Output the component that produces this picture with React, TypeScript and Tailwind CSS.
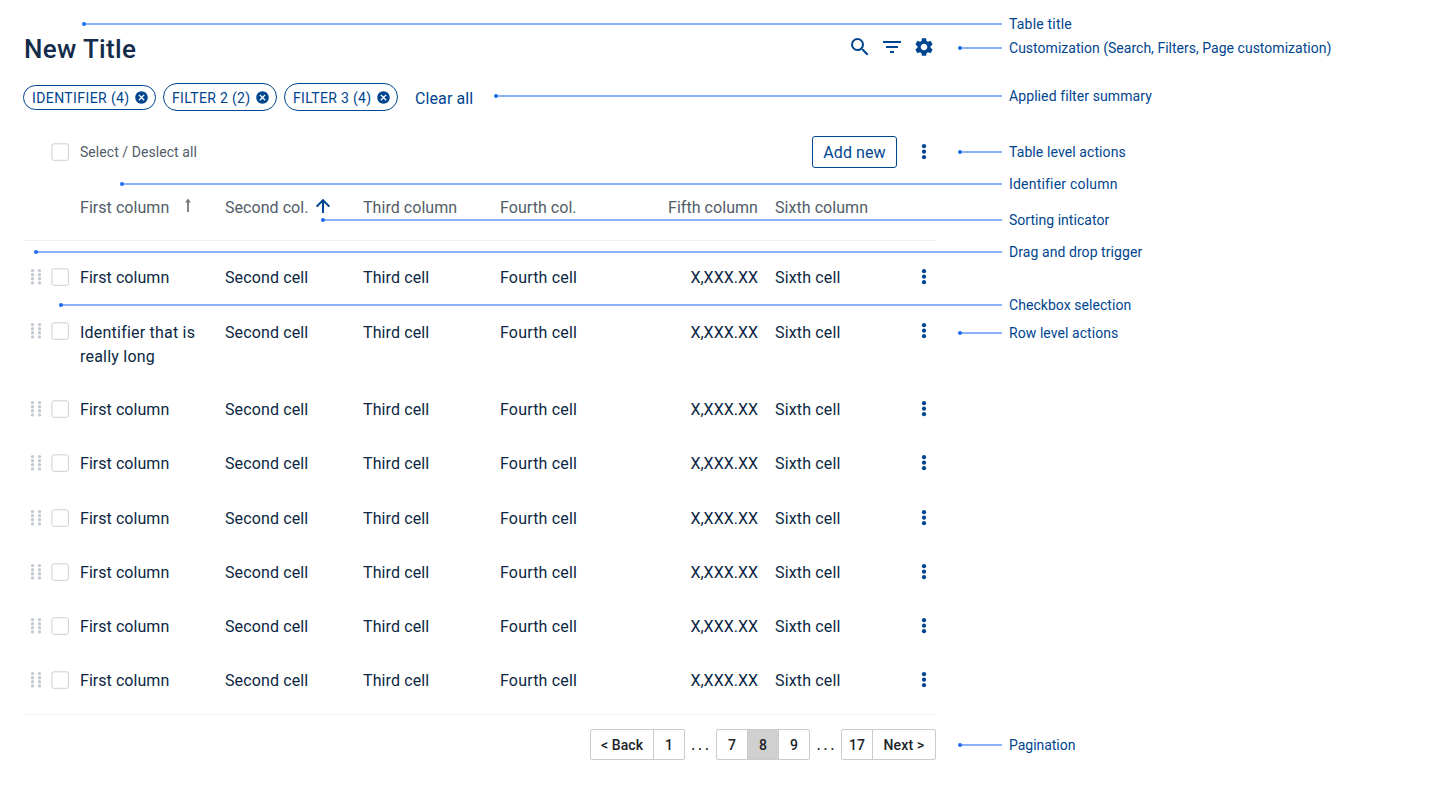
import type { ReactNode } from "react";
import { MdCancel, MdFilterList, MdSearch, MdSettings } from "react-icons/md";

const GRID = "grid grid-cols-[28px_28px_145px_138px_137px_137px_138px_137px_24px]";

const identifiers = [
  "First column",
  "Identifier that is really long",
  "First column",
  "First column",
  "First column",
  "First column",
  "First column",
  "First column",
];

const callouts = [
  { label: "Table title", gap: "mt-3", line: "w-[918px]", ls: "tracking-[0.2px]" },
  { label: "Customization (Search, Filters, Page customization)", gap: "", line: "w-[42px]", ls: "tracking-[0.02px]" },
  { label: "Applied filter summary", gap: "mt-6", line: "w-[506px]", ls: "tracking-[0.09px]" },
  { label: "Table level actions", gap: "mt-8", line: "w-[42px]", ls: "tracking-[0.1px]" },
  { label: "Identifier column", gap: "mt-2", line: "w-[880px]", ls: "tracking-[0.2px]" },
  { label: "Sorting inticator", gap: "mt-3", line: "w-[679px]", ls: "tracking-[0.03px]" },
  { label: "Drag and drop trigger", gap: "mt-2", line: "w-[966px]", ls: "tracking-[0.07px]" },
  { label: "Checkbox selection", gap: "mt-[29px]", line: "w-[941px]", ls: "tracking-[0.05px]" },
  { label: "Row level actions", gap: "mt-1", line: "w-[42px]", ls: "tracking-[0.07px]" },
  { label: "Pagination", gap: "mt-[388px]", line: "w-[42px]", ls: "tracking-[-0.03px]" },
];

function Kebab() {
  return (
    <svg width="24" height="24" viewBox="0 0 24 24" fill="#00458f">
      <circle cx="12" cy="6.2" r="2.1" />
      <circle cx="12" cy="11.7" r="2.1" />
      <circle cx="12" cy="17.2" r="2.1" />
    </svg>
  );
}

function DragHandle() {
  return (
    <svg width="24" height="24" viewBox="0 0 24 24" fill="#c3cad4">
      {[5.6, 9.7, 13.8, 17.9].map((y) => (
        <g key={y}>
          <circle cx="8.5" cy={y} r="1.7" />
          <circle cx="15.5" cy={y} r="1.7" />
        </g>
      ))}
    </svg>
  );
}

function Checkbox() {
  return (
    <svg width="18" height="24" viewBox="0 0 18 24" fill="none" stroke="#c9d0d8" className="-ml-px">
      <rect x="0.9" y="3.8" width="16.5" height="16.5" rx="2" />
    </svg>
  );
}

function Chip({ children, className }: { children: ReactNode; className: string }) {
  return (
    <button className={`flex items-center justify-between rounded-full border border-[#00458f] pr-[6px] pl-2 text-sm text-[#00458f] ${className}`}>
      <span className="pt-px">{children}</span>
      <MdCancel size={15} />
    </button>
  );
}

function Page({ children, className = "" }: { children: ReactNode; className?: string }) {
  return (
    <button className={`flex h-full items-center justify-center border-l border-[#cbcbcb] pt-px first:border-l-0 ${className}`}>
      {children}
    </button>
  );
}

export default function App() {
  return (
    <div className="flex h-[808px] w-[1440px] overflow-hidden bg-white pl-6 font-[Roboto,'Noto_Sans',sans-serif] text-base text-[#0b2744]">
      <main className="flex w-[912px] flex-col">
        <header className="mt-8 flex h-8 items-center justify-between">
          <h1 className="pt-[2px] text-[26px] leading-8 font-medium tracking-[0.35px] text-[#132c4a]">New Title</h1>
          <div className="flex items-center gap-2 pb-[2px] text-[#00458f]">
            <MdSearch size={24} />
            <MdFilterList size={24} />
            <div className="flex w-6 justify-center"><MdSettings size={22} /></div>
          </div>
        </header>

        <div className="mt-[19px] -ml-px flex h-7 items-center gap-[7px]">
          <Chip className="h-[25px] w-[133px] tracking-[0.4px]">IDENTIFIER (4)</Chip>
          <Chip className="h-7 w-[114px] tracking-[0.33px]">FILTER 2 (2)</Chip>
          <Chip className="h-7 w-[114px] tracking-[0.33px]">FILTER 3 (4)</Chip>
          <a className="ml-[10px] pt-[3px] tracking-[0.1px] text-[#00458f]">Clear all</a>
        </div>

        <div className="mt-[25px] flex h-8 items-center pl-7">
          <div className="w-7"><Checkbox /></div>
          <span className="text-sm tracking-[0.06px] text-[#525c69]">Select / Deslect all</span>
          <button className="mr-[15px] ml-auto h-8 w-[85px] rounded-[3px] border border-[#00458f] pt-px tracking-[0.1px] text-[#00458f]">Add new</button>
          <Kebab />
        </div>

        <div className={`${GRID} mt-[28px] h-[45px] border-b border-[#f1f1f1] leading-6 tracking-[0.05px] text-[#525c69]`}>
          <span />
          <span />
          <span className="flex">
            First column
            <svg width="8" height="24" viewBox="0 0 8 24" fill="#777777" className="ml-[15px]">
              <path d="M4 2.4 6.8 6.4H4.9V16H3.1V6.4H1.2Z" />
            </svg>
          </span>
          <span className="flex">
            Second col.
            <svg width="16" height="24" viewBox="0 0 16 24" fill="none" stroke="#00458f" strokeWidth="2" className="ml-[7px]">
              <path d="M8 17V4.5M1.6 10.6 8 4.2l6.4 6.4" />
            </svg>
          </span>
          <span>Third column</span>
          <span>Fourth col.</span>
          <span className="-ml-4 pr-[17px] text-right">Fifth column</span>
          <span>Sixth column</span>
          <span />
        </div>

        <div className="h-[474px] border-b border-[#f4f4f4] leading-6 tracking-[0.12px]">
          {identifiers.map((name, i) => {
            const wraps = name.length > 20;
            return (
              <div key={i} className={`${GRID} pt-6 ${wraps ? "pb-[4.15px] *:[span]:pt-[2px]" : "pb-[5.15px] *:[span]:pt-px"}`}>
                <DragHandle />
                <Checkbox />
                <span className={wraps ? "pr-5 tracking-[0.22px]" : "tracking-[0.05px]"}>{name}</span>
                <span>Second cell</span>
                <span>Third cell</span>
                <span className="tracking-[0.18px]">Fourth cell</span>
                <span className="pr-[17px] text-right tracking-normal">X,XXX.XX</span>
                <span className="tracking-[0.16px]">Sixth cell</span>
                <Kebab />
              </div>
            );
          })}
        </div>

        <nav className="mt-[14px] flex h-[31px] items-center justify-end text-sm font-medium text-[#202327]">
          <div className="flex h-full rounded-[2px] border border-[#cbcbcb]">
            <Page className="w-[62px] tracking-[0.1px]">&lt; Back</Page>
            <Page className="w-[31px]">1</Page>
          </div>
          <span className="w-[31px] pt-px pl-[2px] text-center tracking-[3px]">...</span>
          <div className="flex h-full rounded-[2px] border border-[#cbcbcb]">
            <Page className="w-[30px]">7</Page>
            <Page className="w-[31px] bg-[#d0d0d0]">8</Page>
            <Page className="w-[31px]">9</Page>
          </div>
          <span className="w-[31px] pt-px pl-[3px] text-center tracking-[3px]">...</span>
          <div className="flex h-full rounded-[2px] border border-[#cbcbcb]">
            <Page className="w-[30px]">17</Page>
            <Page className="w-[63px] tracking-[0.2px]">Next &gt;</Page>
          </div>
        </nav>
      </main>

      <aside className="ml-[73px] flex flex-col text-sm leading-6 text-[#00458f]">
        {callouts.map((c) => (
          <div key={c.label} className={`relative h-6 whitespace-nowrap ${c.gap} ${c.ls}`}>
            <span className={`absolute top-[11px] right-full mr-[7px] h-[2px] bg-[#8bb1f9] ${c.line}`}>
              <span className="absolute top-[-1px] left-[-2px] size-1 rounded-full bg-[#1f6bf1]" />
            </span>
            {c.label}
          </div>
        ))}
      </aside>
    </div>
  );
}
